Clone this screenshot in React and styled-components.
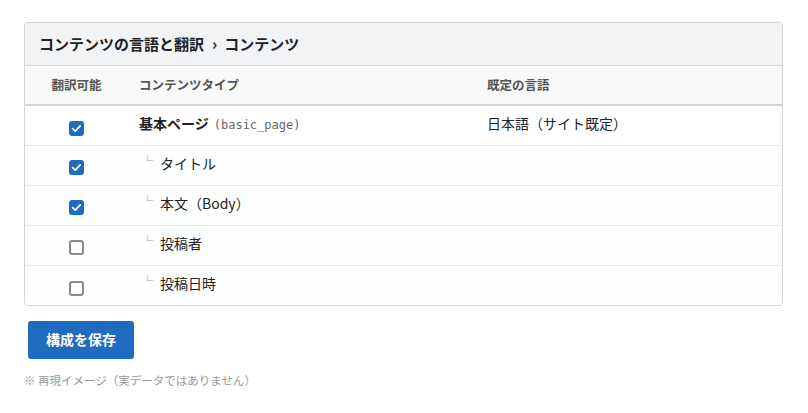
import React from 'react'
import styled, { createGlobalStyle } from 'styled-components'

const GlobalStyle = createGlobalStyle`
  html, body { margin: 0; padding: 0; background: #fff; }
  body {
    font-family: "Noto Sans CJK JP", "Noto Sans", sans-serif;
    color: #222;
  }
`

const Page = styled.div`
  padding: 22px 25px 0 24px;
`

const Card = styled.section`
  border: 1px solid #d3d4d6;
  border-radius: 4px;
  overflow: hidden;
`

const CardTitle = styled.h2`
  margin: 0;
  height: 43px;
  display: flex;
  align-items: center;
  padding: 0 14px 2px;
  box-sizing: border-box;
  background: #f2f3f5;
  border-bottom: 1px solid #d6d7d9;
  font-size: 15px;
  font-weight: 700;
  color: #222;
  .sep { margin: 0 7px 0 8px; font-size: 16px; font-weight: 700; }
`

const Table = styled.table`
  width: 100%;
  border-collapse: collapse;
  table-layout: fixed;
  font-size: 14px;
`

const Th = styled.th`
  height: 39px;
  box-sizing: border-box;
  padding: 0 0 2px;
  padding-left: ${({ $pad }) => $pad || 0}px;
  text-align: ${({ $center }) => ($center ? 'center' : 'left')};
  font-size: 12.5px;
  font-weight: 700;
  color: #555;
  background: #f8f9f9;
  border-bottom: 2px solid #d3d4d6;
  width: ${({ $w }) => ($w ? `${$w}px` : 'auto')};
`

const Tr = styled.tr`
  height: 40px;
  background: ${({ $first }) => ($first ? '#fff' : '#fcfdfd')};
  td { border-bottom: 1px solid #e6e7e8; }
  &:last-child td { border-bottom: none; }
`

const Td = styled.td`
  padding: 0 0 ${({ $center }) => ($center ? 0 : 5)}px;
  padding-left: ${({ $pad }) => $pad || 0}px;
  text-align: ${({ $center }) => ($center ? 'center' : 'left')};
  vertical-align: middle;
  color: #222;
`

const Box = styled.span`
  display: inline-block;
  vertical-align: middle;
  width: 15px;
  height: 15px;
  box-sizing: border-box;
  border-radius: 3px;
  margin-top: 2px;
  background: ${({ $on }) => ($on ? '#1f6bbf' : '#fff')};
  border: ${({ $on }) => ($on ? 'none' : '2px solid #8a8a8a')};
  svg { display: block; }
`

const Name = styled.span`
  font-weight: 700;
`

const Machine = styled.span`
  font-family: "DejaVu Sans Mono", monospace;
  font-size: 12px;
  color: #666;
  margin-left: 5px;
`

const Child = styled.span`
  display: inline-flex;
  align-items: center;
  padding-left: 3px;
  .branch { color: #999; font-size: 11px; margin-right: 7px; position: relative; top: -3px; }
`

const SaveButton = styled.button`
  margin: 15px 0 0 4px;
  width: 106px;
  height: 38px;
  padding: 0 0 2px;
  border: none;
  border-radius: 3px;
  background: #1f6bbf;
  color: #fff;
  font-family: "Noto Sans CJK JP", sans-serif;
  font-size: 14px;
  font-weight: 700;
`

const Note = styled.p`
  margin: 13px 0 0;
  font-size: 11.5px;
  color: #999;
`

const Check = ({ on }) => (
  <Box $on={on}>
    {on && (
      <svg width="15" height="15" viewBox="0 0 15 15">
        <path d="M3.6 7.6l2.6 2.5 5-5.2" fill="none" stroke="#fff" strokeWidth="1.8" strokeLinecap="round" strokeLinejoin="round" />
      </svg>
    )}
  </Box>
)

const rows = [
  { on: true, label: 'タイトル' },
  { on: true, label: '本文（Body）' },
  { on: false, label: '投稿者' },
  { on: false, label: '投稿日時' },
]

export default function App() {
  return (
    <>
      <GlobalStyle />
      <Page>
        <Card>
          <CardTitle>
            コンテンツの言語と翻訳<span className="sep">›</span>コンテンツ
          </CardTitle>
          <Table>
            <thead>
              <tr>
                <Th $center $w={103}>翻訳可能</Th>
                <Th $pad={11} $w={359}>コンテンツタイプ</Th>
                <Th>既定の言語</Th>
              </tr>
            </thead>
            <tbody>
              <Tr $first>
                <Td $center><Check on /></Td>
                <Td $pad={11}><Name>基本ページ</Name><Machine>(basic_page)</Machine></Td>
                <Td>日本語（サイト既定）</Td>
              </Tr>
              {rows.map((r) => (
                <Tr key={r.label}>
                  <Td $center><Check on={r.on} /></Td>
                  <Td $pad={11}>
                    <Child><span className="branch">└</span>{r.label}</Child>
                  </Td>
                  <Td />
                </Tr>
              ))}
            </tbody>
          </Table>
        </Card>
        <SaveButton>構成を保存</SaveButton>
        <Note>※ 再現イメージ（実データではありません）</Note>
      </Page>
    </>
  )
}
